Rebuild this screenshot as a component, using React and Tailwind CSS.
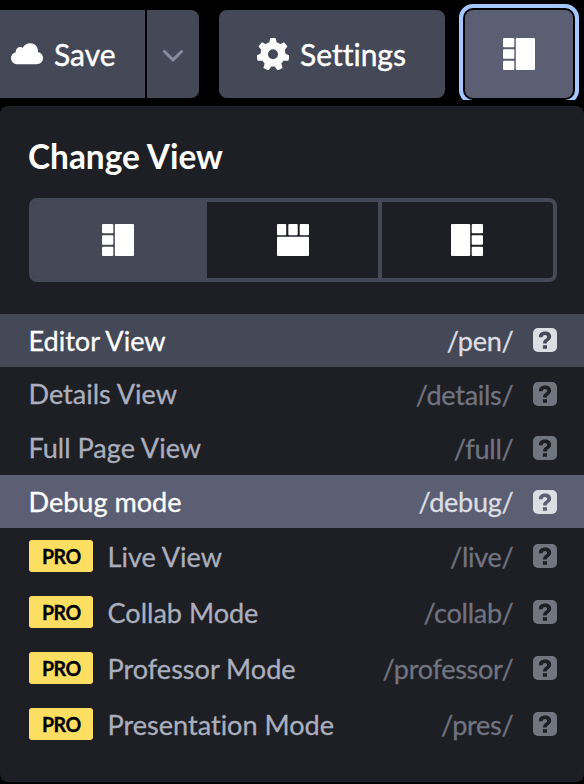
import React, { useState } from 'react';

const layouts = [
  { id: 'left', cell: 'w-[174px]' },
  { id: 'top', cell: 'w-[175px]' },
  { id: 'right', cell: 'w-[171px] pr-px' },
];

const views = [
  { name: 'Editor View', path: '/pen/', active: true },
  { name: 'Details View', path: '/details/' },
  { name: 'Full Page View', path: '/full/' },
  { name: 'Debug mode', path: '/debug/', hovered: true },
  { name: 'Live View', path: '/live/', pro: true },
  { name: 'Collab Mode', path: '/collab/', pro: true },
  { name: 'Professor Mode', path: '/professor/', pro: true },
  { name: 'Presentation Mode', path: '/pres/', pro: true },
];

// One icon drawn for the left layout, turned or flipped for the others
const LayoutIcon = ({ layout }) => {
  const transforms = {
    left: undefined,
    top: 'matrix(0 1 1 0 0 0)',
    right: 'matrix(-1 0 0 1 32 0)',
  };

  return (
    <svg width="32" height="32" viewBox="0 0 32 32" fill="currentColor" className="block shrink-0">
      <g transform={transforms[layout]}>
        <rect x="0" y="0" width="11.3" height="9.2" rx="1" />
        <rect x="0" y="11.3" width="11.3" height="9.4" rx="1" />
        <rect x="0" y="22.7" width="11.3" height="9.3" rx="1" />
        <rect x="12.8" y="0" width="19.2" height="32" rx="1" />
      </g>
    </svg>
  );
};

const CloudIcon = () => (
  <svg width="32" height="22" viewBox="0 0 32 22" fill="currentColor" className="block shrink-0">
    <path d="M6.6 21.2C2.8 21.2 0 18.6 0 15.2c0-3 2-5.400 4.800-5.900C4.600 6.200 6.700 4 9.300 4c1 0 1.800.2 2.500.7C13.100 2 16 .3 19.200.3c4.400 0 7.700 3.200 7.800 7.400 0 .500 0 .900-.1 1.400 2.900.5 5.100 2.900 5.100 5.900 0 3.500-2.700 6.200-6.500 6.200z" />
  </svg>
);

const GearIcon = () => (
  <svg width="32" height="32" viewBox="0 0 32 32" fill="none" className="block shrink-0">
    <circle cx="16" cy="16.2" r="8.7" stroke="currentColor" strokeWidth="7.4" />
    {[0, 1, 2, 3, 4, 5, 6].map((i) => (
      <path
        key={i}
        d="M12.300 5 L13.100 .8 Q13.200 .1 13.900 .1 H18.100 Q18.800 .1 18.900 .8 L19.700 5 Z"
        fill="currentColor"
        transform={`rotate(${(i * 360) / 7} 16 16.500)`}
      />
    ))}
  </svg>
);

const HelpIcon = () => (
  <svg width="24" height="24" viewBox="0 0 24 24" className="block shrink-0">
    <path
      fill="currentColor"
      fillRule="evenodd"
      d="M5 0h14a5 5 0 0 1 5 5v14a5 5 0 0 1-5 5H5a5 5 0 0 1-5-5V5a5 5 0 0 1 5-5zM5.900 9.200h3.800c0-1.500.8-2.300 2.300-2.300 1.400 0 2.100.7 2.100 1.800 0 1-.5 1.600-1.700 2.400-1.800 1.300-2.400 2.300-2.300 4.400h3.700c0-1.200.4-1.700 1.700-2.600 1.600-1.100 2.600-2.400 2.600-4.400 0-2.900-2.400-4.900-6.100-4.900-3.700 0-6.100 2.100-6.100 5.600zM9.900 17.200v3.500h4.100v-3.500z"
    />
  </svg>
);

const Toolbar = () => (
  <div className="flex h-[100px] items-start overflow-hidden pt-[10px] text-white">
    <button className="flex h-[88px] w-[145px] shrink-0 items-center bg-[#444857] pl-[11px] text-[30px] [-webkit-text-stroke:0.4px]">
      <CloudIcon />
      <span className="ml-[11px]">Save</span>
    </button>
    <button className="ml-[2px] flex h-[88px] w-[52px] shrink-0 items-center justify-center rounded-r-lg bg-[#444857] text-[#868ca0]">
      <svg width="20" height="12" viewBox="0 0 20 12" fill="none" className="mt-1 block">
        <path d="M1.500 1.500 L10 9.900 L18.500 1.500" stroke="currentColor" strokeWidth="3" strokeLinecap="round" strokeLinejoin="round" />
      </svg>
    </button>
    <button className="ml-5 flex h-[88px] w-[226px] shrink-0 items-center rounded-lg bg-[#444857] pl-[38px] text-[30px] [-webkit-text-stroke:0.4px]">
      <GearIcon />
      <span className="ml-[11px]">Settings</span>
    </button>
    <button className="ml-5 flex h-[88px] w-[108px] shrink-0 items-center justify-center rounded-lg bg-[#5c5f73] outline-4 outline-offset-2 outline-[#a3c7ff]">
      <LayoutIcon layout="left" />
    </button>
  </div>
);

const ViewRow = ({ view }) => {
  const lit = view.active || view.hovered;
  let row = 'h-[54px] text-[#abaebd]';
  if (view.pro) row = 'h-14 text-[#abaebd]';
  if (view.active) row = 'h-[53px] bg-[#444857] pb-px text-white';
  if (view.hovered) row = 'h-[53px] bg-[#5c5f73] text-white';

  let nudge = '';
  if (view.pro) nudge = 'pt-[2px]';
  if (view.active) nudge = 'pt-[1px]';

  return (
    <li className={`flex items-center pl-[28.5px] pr-[27px] ${row}`}>
      {view.pro && (
        <span className="mr-[14.5px] ml-[0.5px] flex h-8 w-16 items-center justify-center rounded-[3px] bg-[#fcde60] text-[21.5px] font-bold tracking-[-0.5px] text-black">
          <span className="scale-x-[0.91]">PRO</span>
        </span>
      )}
      <span className={nudge}>{view.name}</span>
      <span className={`ml-auto pt-[1px] tracking-[-0.3px] ${lit ? 'text-[#dddee3]' : 'text-[#717380]'}`}>{view.path}</span>
      <span className={`ml-[19.5px] ${lit ? 'text-[#dddee3]' : 'text-[#717580]'}`}>
        <HelpIcon />
      </span>
    </li>
  );
};

const App = () => {
  const [layout, setLayout] = useState('left');

  return (
    <div className="h-[784px] w-[584px] overflow-hidden bg-black font-['Lato',sans-serif] [font-variant-ligatures:none]">
      <Toolbar />
      <div className="mt-[6px] h-[676px] rounded-lg bg-[#1e1f24]">
        <h3 className="h-[92px] pl-[28px] pt-[29px] text-[33.4px] leading-[42px] font-bold text-white">Change View</h3>
        <div className="ml-[29px] flex h-[84px] w-[528px] divide-x-4 divide-[#444857] overflow-hidden rounded-lg border-4 border-[#444857] text-white">
          {layouts.map(({ id, cell }) => (
            <button
              key={id}
              onClick={() => setLayout(id)}
              className={`flex items-center justify-center ${cell} ${layout === id ? 'bg-[#444857]' : ''}`}
            >
              <LayoutIcon layout={id} />
            </button>
          ))}
        </div>
        <ul className="mt-8 text-[27.1px] leading-[34px] tracking-[-0.02px] [-webkit-text-stroke:0.3px]">
          {views.map((view) => (
            <ViewRow key={view.path} view={view} />
          ))}
        </ul>
      </div>
    </div>
  );
};

export default App;
